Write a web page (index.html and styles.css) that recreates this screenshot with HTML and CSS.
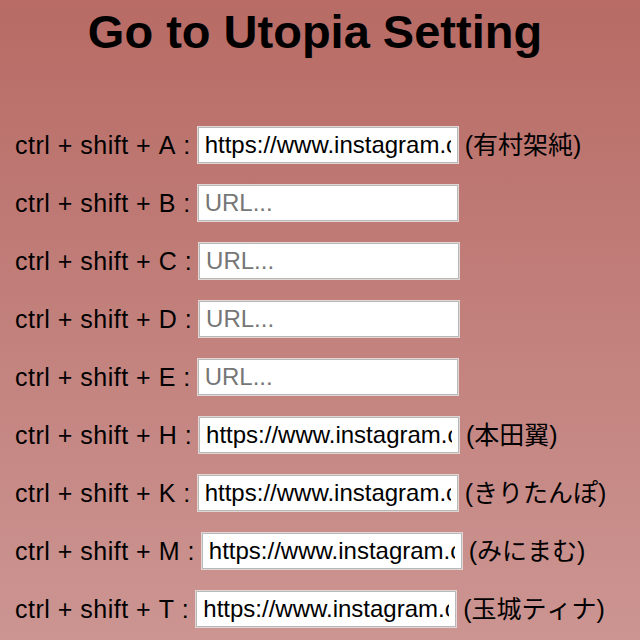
FILE: index.html
```html
<!DOCTYPE html>
<html lang="ja">
<head>
<meta charset="utf-8">
<title>Go to Utopia Setting</title>
<link rel="stylesheet" href="styles.css">
</head>
<body>
<h1 class="title">Go to Utopia Setting</h1>
<div class="list">
  <div class="row"><span class="key">ctrl + shift + A :</span> <input class="url" type="text" value="https://www.instagram.com/kasumi_arimura.official/" placeholder="URL..."> <span class="who">(有村架純)</span></div>
  <div class="row"><span class="key">ctrl + shift + B :</span> <input class="url" type="text" placeholder="URL..."></div>
  <div class="row"><span class="key">ctrl + shift + C :</span> <input class="url" type="text" placeholder="URL..."></div>
  <div class="row"><span class="key">ctrl + shift + D :</span> <input class="url" type="text" placeholder="URL..."></div>
  <div class="row"><span class="key">ctrl + shift + E :</span> <input class="url" type="text" placeholder="URL..."></div>
  <div class="row"><span class="key">ctrl + shift + H :</span> <input class="url" type="text" value="https://www.instagram.com/tsubasa_hh/" placeholder="URL..."> <span class="who">(本田翼)</span></div>
  <div class="row"><span class="key">ctrl + shift + K :</span> <input class="url" type="text" value="https://www.instagram.com/kiritampo/" placeholder="URL..."> <span class="who">(きりたんぽ)</span></div>
  <div class="row"><span class="key">ctrl + shift + M :</span> <input class="url" type="text" value="https://www.instagram.com/minimamu/" placeholder="URL..."> <span class="who">(みにまむ)</span></div>
  <div class="row"><span class="key">ctrl + shift + T :</span> <input class="url" type="text" value="https://www.instagram.com/tina_tamashiro/" placeholder="URL..."> <span class="who">(玉城ティナ)</span></div>
</div>
</body>
</html>
```
FILE: styles.css
```css
html {
  min-height: 100%;
  background: linear-gradient(to bottom, #b86b65 0%, #cc9592 100%);
}
body {
  margin: 0;
  min-height: 640px;
  font-family: "Liberation Sans", Arial, "Noto Sans CJK JP", sans-serif;
  color: #000;
  font-kerning: none;
}
.title {
  margin: 0;
  padding: 5px 10px 0 0;
  text-align: center;
  font-size: 47px;
  font-weight: bold;
  line-height: 54px;
}
.list {
  padding: 66px 0 0 15px;
  display: flex;
  flex-direction: column;
  gap: 22px;
}
.row {
  height: 36px;
  line-height: 36px;
  font-size: 25px;
  white-space: nowrap;
}
.key {
  letter-spacing: 0.5px;
}
.url {
  box-sizing: border-box;
  width: 260px;
  height: 36px;
  padding: 0 6px;
  border: 1px solid #b9b9b9;
  box-shadow: 0 0 0 1px #e2d6d5;
  background: #fff;
  font-family: "Liberation Sans", Arial, sans-serif;
  font-size: 24px;
  color: #000;
  vertical-align: middle;
}
.url::placeholder {
  color: #767676;
}
.key, .who {
  vertical-align: middle;
}
```
